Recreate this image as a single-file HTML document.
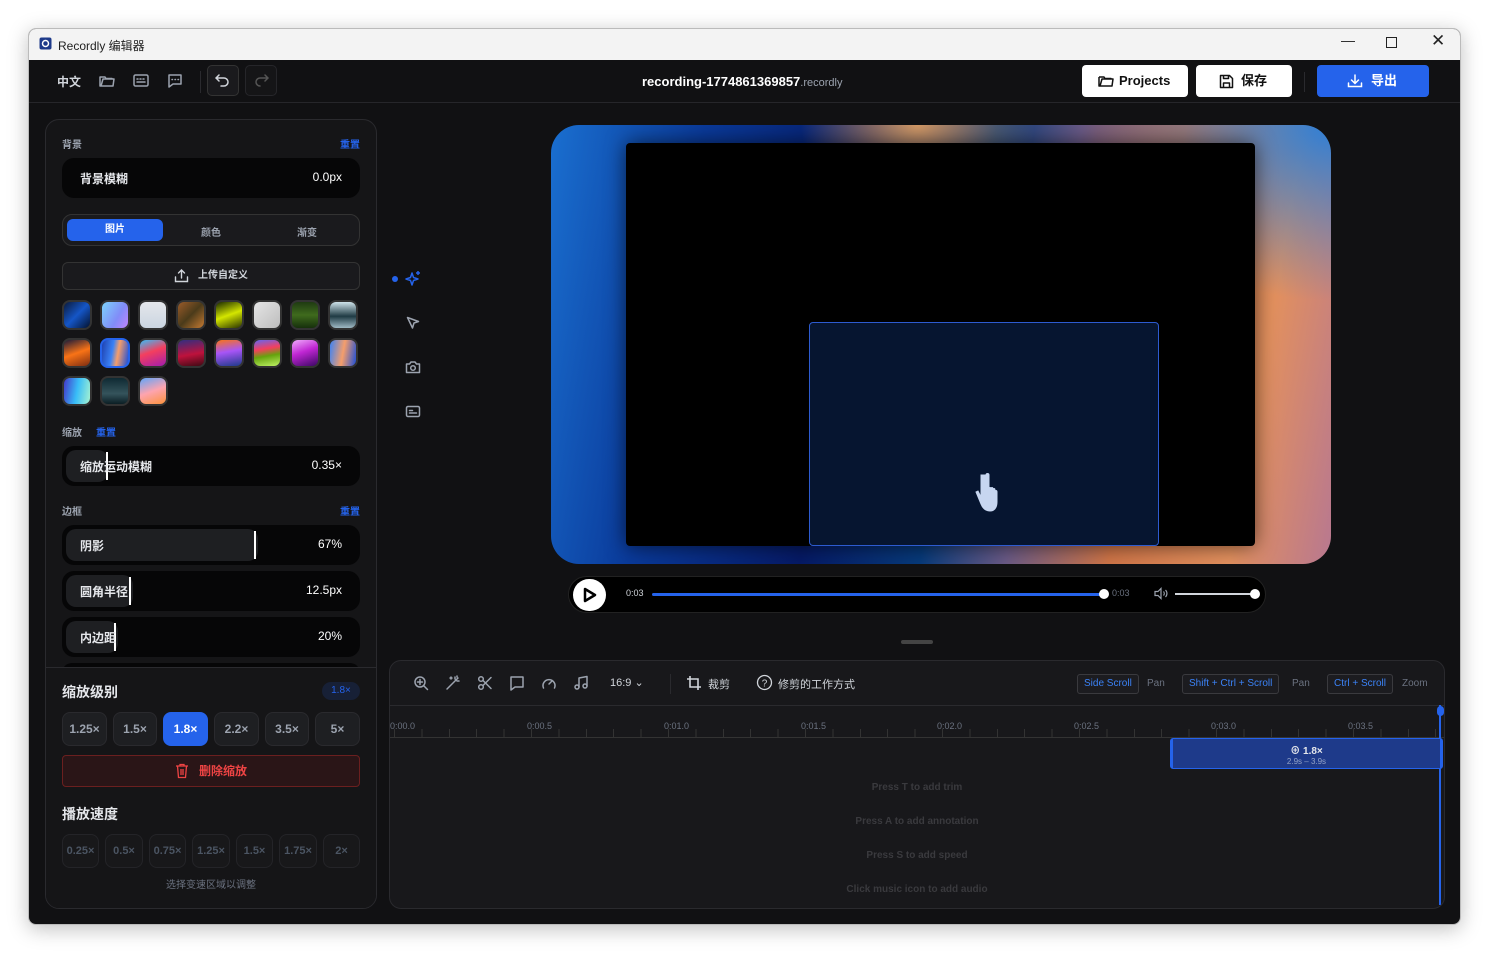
<!DOCTYPE html>
<html><head><meta charset="utf-8"><style>
*{box-sizing:border-box;margin:0;padding:0}
body{width:1490px;height:954px;background:#fff;font-family:"Liberation Sans","Noto Sans CJK SC",sans-serif;position:relative;overflow:hidden;color:#e5e7eb}
.a{position:absolute}
.win{left:28px;top:28px;width:1433px;height:897px;background:#111113;border:1px solid #bbb;border-radius:8px;overflow:hidden;box-shadow:0 4px 20px rgba(0,0,0,.25)}
.tb{left:0;top:0;width:100%;height:31px;background:#f3f3f3;color:#222;font-size:12px}
.ic{stroke:#9ca3af;fill:none;stroke-width:1.5;stroke-linecap:round;stroke-linejoin:round}
.panel{left:16px;top:90px;width:332px;height:790px;background:#151517;border:1px solid #2a2a2e;border-radius:14px;overflow:hidden}
.lbl{font-size:10px;color:#9ca3af;font-weight:bold}
.rst{font-size:10px;color:#2563eb;font-weight:bold}
.sl{left:16px;width:298px;height:40px;background:#060607;border-radius:12px}
.sl .f{position:absolute;left:4px;top:4px;height:32px;background:#1e1f22;border-radius:10px}
.sl .k{position:absolute;top:6px;width:2px;height:28px;background:#fff}
.sl .t{position:absolute;left:18px;top:12px;font-size:12px;font-weight:bold;color:#e5e7eb}
.sl .v{position:absolute;right:18px;top:12px;font-size:12px;color:#fff}
.th{width:30px;height:30px;border-radius:8px;border:2px solid #333}
.zb{top:592px;height:34px;border-radius:8px;background:#1e1f22;border:1px solid #2a2a2e;font-size:12px;font-weight:bold;color:#9ca3af;text-align:center;line-height:32px}
.sb{top:714px;height:34px;border-radius:8px;background:#18181a;border:1px solid #242428;font-size:11px;font-weight:bold;color:#4b5563;text-align:center;line-height:32px}
.kb{top:13px;height:20px;border:1px solid #3a3a3e;border-radius:3px;background:#1c1c20;color:#3b82f6;font-size:10px;line-height:18px;padding:0 6px}
.kt{top:17px;font-size:10px;color:#6b7280}
.tk{font-size:9px;color:#6b7280;top:60px}
.hint{left:0;width:100%;text-align:center;font-size:10px;color:#3a3a3e;font-weight:bold}
</style></head><body>
<div class="a win">
 <div class="a tb">
  <svg class="a" style="left:10px;top:8px" width="13" height="13"><rect x="0.5" y="0.5" width="12" height="12" rx="2" fill="#1e3a8a"/><circle cx="6.5" cy="6.5" r="3" fill="none" stroke="#fff" stroke-width="1.5"/></svg>
  <div class="a" style="left:29px;top:8px">Recordly 编辑器</div>
  <div class="a" style="left:1312px;top:3px;font-size:14px">—</div>
  <div class="a" style="left:1357px;top:8px;width:11px;height:11px;border:1.3px solid #222"></div>
  <div class="a" style="left:1402px;top:2px;font-size:17px">✕</div>
 </div>
 <div class="a" style="left:0;top:73px;width:100%;height:1px;background:#26262a"></div>
 <div class="a" style="left:28px;top:44px;font-size:12px;font-weight:bold;color:#d1d5db">中文</div>
 <svg class="a ic" style="left:70px;top:45px" width="16" height="14"><path d="M1 3v9h13l1-7H4L2 12M1 3h5l1 1.5h6V5"/></svg>
 <svg class="a ic" style="left:104px;top:45px" width="16" height="14"><rect x="1" y="1" width="14" height="11" rx="1.5"/><path d="M4 5h1M7 5h1M10 5h1M4 8h8"/></svg>
 <svg class="a ic" style="left:138px;top:44px" width="16" height="16"><path d="M2 2h12v9H6l-4 3z"/><path d="M5 6.5h.5M8 6.5h.5M11 6.5h.5"/></svg>
 <div class="a" style="left:171px;top:42px;width:1px;height:22px;background:#2a2a2e"></div>
 <div class="a" style="left:178px;top:36px;width:32px;height:31px;border:1px solid #333;border-radius:5px;background:#1a1a1d"></div>
 <svg class="a" style="left:186px;top:44px" width="16" height="14"><path d="M4 2L1 5l3 3M1 5h8a4 4 0 010 8H6" fill="none" stroke="#d1d5db" stroke-width="1.5" stroke-linecap="round"/></svg>
 <div class="a" style="left:216px;top:36px;width:32px;height:31px;border:1px solid #26262a;border-radius:5px;background:#151517"></div>
 <svg class="a" style="left:224px;top:44px" width="16" height="14"><path d="M12 2l3 3-3 3M15 5H7a4 4 0 000 8" fill="none" stroke="#555" stroke-width="1.5" stroke-linecap="round"/></svg>
 <div class="a" style="left:613px;top:45px;font-size:13px;font-weight:bold;color:#fff">recording-1774861369857<span style="font-weight:normal;font-size:11px;color:#9ca3af">.recordly</span></div>
 <div class="a" style="left:1053px;top:36px;width:106px;height:32px;background:#fff;border-radius:4px;color:#111;font-size:13px;font-weight:bold;line-height:32px;padding-left:37px">Projects</div>
 <svg class="a" style="left:1069px;top:45px" width="16" height="14"><path d="M1 3v9h13l1-7H4L2 12M1 3h5l1 1.5h6V5" fill="none" stroke="#111" stroke-width="1.5" stroke-linejoin="round"/></svg>
 <div class="a" style="left:1167px;top:36px;width:96px;height:32px;background:#fff;border-radius:4px;color:#111;font-size:13px;font-weight:bold;line-height:32px;padding-left:45px">保存</div>
 <svg class="a" style="left:1190px;top:45px" width="15" height="15"><path d="M1.5 1.5h9l3 3v9h-12z M4.5 1.5v3h5v-3 M4.5 13.5v-4.5h6v4.5" fill="none" stroke="#111" stroke-width="1.5" stroke-linejoin="round"/></svg>
 <div class="a" style="left:1275px;top:43px;width:1px;height:20px;background:#2a2a2e"></div>
 <div class="a" style="left:1288px;top:36px;width:112px;height:32px;background:#2563eb;border-radius:4px;color:#fff;font-size:13px;font-weight:bold;line-height:32px;padding-left:54px">导出</div>
 <svg class="a" style="left:1318px;top:45px" width="16" height="14"><path d="M8 1v8M4.5 6L8 9.5 11.5 6M1.5 9v3.5h13V9" fill="none" stroke="#fff" stroke-width="1.5" stroke-linecap="round"/></svg>

 <div class="a panel">
  <div class="a lbl" style="left:16px;top:16px">背景</div>
  <div class="a rst" style="right:16px;top:16px">重置</div>
  <div class="a sl" style="top:38px"><div class="t">背景模糊</div><div class="v">0.0px</div></div>
  <div class="a" style="left:16px;top:94px;width:298px;height:32px;border:1px solid #333;border-radius:10px;background:#1a1a1d"></div>
  <div class="a" style="left:21px;top:99px;width:96px;height:22px;background:#2563eb;border-radius:6px;font-size:10px;font-weight:bold;color:#fff;text-align:center;line-height:22px">图片</div>
  <div class="a" style="left:155px;top:104px;font-size:10px;font-weight:bold;color:#9ca3af">颜色</div>
  <div class="a" style="left:251px;top:104px;font-size:10px;font-weight:bold;color:#9ca3af">渐变</div>
  <div class="a" style="left:16px;top:142px;width:298px;height:28px;border:1px solid #333;border-radius:6px;background:#1a1a1d;font-size:10px;font-weight:bold;color:#d1d5db;line-height:26px;padding-left:135px">上传自定义</div>
  <svg class="a" style="left:128px;top:148px" width="15" height="15"><path d="M7.5 10V2M4.5 5l3-3 3 3M1.5 9v4.5h12V9" fill="none" stroke="#d1d5db" stroke-width="1.4" stroke-linecap="round"/></svg>
  <div class="a th" style="left:16px;top:180px;background:linear-gradient(135deg,#0b1a3a,#1556c7 50%,#04122e)"></div>
  <div class="a th" style="left:54px;top:180px;background:linear-gradient(120deg,#7dd3fc,#818cf8 60%,#c084fc)"></div>
  <div class="a th" style="left:92px;top:180px;background:linear-gradient(#e5e7eb,#cbd5e1)"></div>
  <div class="a th" style="left:130px;top:180px;background:linear-gradient(135deg,#9a5b2a,#4b3b1a,#c57a32)"></div>
  <div class="a th" style="left:168px;top:180px;background:linear-gradient(160deg,#1a2a00,#d4e600 50%,#2a3300)"></div>
  <div class="a th" style="left:206px;top:180px;background:linear-gradient(135deg,#e5e5e5,#bdbdbd)"></div>
  <div class="a th" style="left:244px;top:180px;background:linear-gradient(#1f3a12,#3f6b1d,#16300c)"></div>
  <div class="a th" style="left:282px;top:180px;background:linear-gradient(#cfe3ea,#1f3b44 55%,#9fb9c4)"></div>
  <div class="a th" style="left:16px;top:218px;background:linear-gradient(160deg,#1a1a3a,#f97316 50%,#7c2d12)"></div>
  <div class="a th" style="left:54px;top:218px;border-color:#2563eb;background:linear-gradient(100deg,#1e40af,#3b82f6 40%,#f59e6b 60%,#1d4ed8)"></div>
  <div class="a th" style="left:92px;top:218px;background:linear-gradient(160deg,#38bdf8,#f43f5e 45%,#a21caf)"></div>
  <div class="a th" style="left:130px;top:218px;background:linear-gradient(170deg,#312e81,#be123c 55%,#3f0a14)"></div>
  <div class="a th" style="left:168px;top:218px;background:linear-gradient(170deg,#f97316,#a855f7 45%,#1e3a8a)"></div>
  <div class="a th" style="left:206px;top:218px;background:linear-gradient(170deg,#6366f1,#f43f5e 35%,#65a30d 60%,#bef264)"></div>
  <div class="a th" style="left:244px;top:218px;background:linear-gradient(160deg,#f0abfc,#c026d3 45%,#3b0764)"></div>
  <div class="a th" style="left:282px;top:218px;background:linear-gradient(100deg,#3b82f6,#f59e6b 50%,#1d4ed8)"></div>
  <div class="a th" style="left:16px;top:256px;background:linear-gradient(100deg,#4338ca,#38bdf8 50%,#a7f3d0)"></div>
  <div class="a th" style="left:54px;top:256px;background:linear-gradient(#0f2a33,#35545c 60%,#0b1e24)"></div>
  <div class="a th" style="left:92px;top:256px;background:linear-gradient(160deg,#60a5fa,#fda4af 50%,#fb923c)"></div>
  <div class="a lbl" style="left:16px;top:304px">缩放</div>
  <div class="a rst" style="left:50px;top:304px">重置</div>
  <div class="a sl" style="top:326px"><div class="f" style="width:42px"></div><div class="k" style="left:44px"></div><div class="t">缩放运动模糊</div><div class="v">0.35×</div></div>
  <div class="a lbl" style="left:16px;top:383px">边框</div>
  <div class="a rst" style="right:16px;top:383px">重置</div>
  <div class="a sl" style="top:405px"><div class="f" style="width:192px"></div><div class="k" style="left:192px"></div><div class="t">阴影</div><div class="v">67%</div></div>
  <div class="a sl" style="top:451px"><div class="f" style="width:67px"></div><div class="k" style="left:67px"></div><div class="t">圆角半径</div><div class="v">12.5px</div></div>
  <div class="a sl" style="top:497px"><div class="f" style="width:52px"></div><div class="k" style="left:52px"></div><div class="t">内边距</div><div class="v">20%</div></div>
  <div class="a sl" style="top:543px;height:20px"></div>
  <div class="a" style="left:0;top:547px;width:100%;height:250px;background:#151517;border-top:1px solid #2a2a2e"></div>
  <div class="a" style="left:16px;top:562px;font-size:14px;font-weight:bold;color:#e5e7eb">缩放级别</div>
  <div class="a" style="left:276px;top:562px;width:38px;height:18px;border-radius:9px;background:#172036;color:#2563eb;font-size:10px;text-align:center;line-height:18px">1.8×</div>
  <div class="a zb" style="left:16px;width:45px">1.25×</div>
  <div class="a zb" style="left:67px;width:44px">1.5×</div>
  <div class="a zb" style="left:117px;width:45px;background:#2563eb;border-color:#2563eb;color:#fff">1.8×</div>
  <div class="a zb" style="left:168px;width:45px">2.2×</div>
  <div class="a zb" style="left:219px;width:44px">3.5×</div>
  <div class="a zb" style="left:269px;width:45px">5×</div>
  <div class="a" style="left:16px;top:635px;width:298px;height:32px;border:1px solid #6b1f1f;background:#2a1517;border-radius:4px;color:#ef4444;font-size:12px;font-weight:bold;line-height:30px;padding-left:136px">删除缩放</div>
  <svg class="a" style="left:129px;top:643px" width="14" height="16"><path d="M1 3h12M5 3V1.5h4V3M2.5 3l1 11.5h7l1-11.5M6 6v6M8 6v6" fill="none" stroke="#ef4444" stroke-width="1.3"/></svg>
  <div class="a" style="left:16px;top:684px;font-size:14px;font-weight:bold;color:#e5e7eb">播放速度</div>
  <div class="a sb" style="left:16px;width:37px">0.25×</div>
  <div class="a sb" style="left:59px;width:38px">0.5×</div>
  <div class="a sb" style="left:103px;width:37px">0.75×</div>
  <div class="a sb" style="left:146px;width:38px">1.25×</div>
  <div class="a sb" style="left:190px;width:37px">1.5×</div>
  <div class="a sb" style="left:233px;width:38px">1.75×</div>
  <div class="a sb" style="left:277px;width:37px">2×</div>
  <div class="a" style="left:0;top:756px;width:100%;text-align:center;font-size:10px;color:#6b7280">选择变速区域以调整</div>
 </div>

 <div class="a" style="left:363px;top:247px;width:6px;height:6px;border-radius:3px;background:#2563eb"></div>
 <svg class="a" style="left:375px;top:241px" width="18" height="18"><path d="M8 3l1.5 4.5L14 9l-4.5 1.5L8 15l-1.5-4.5L2 9l4.5-1.5z M14 1v4M12 3h4" fill="none" stroke="#2563eb" stroke-width="1.5" stroke-linejoin="round"/></svg>
 <svg class="a ic" style="left:377px;top:287px" width="14" height="14"><path d="M1.5 1.5l11 4-4.5 1.5L6.5 12z"/></svg>
 <svg class="a ic" style="left:376px;top:331px" width="16" height="14"><path d="M1.5 4h3l1.5-2h4l1.5 2h3v8.5h-13z"/><circle cx="8" cy="8" r="2.3"/></svg>
 <svg class="a ic" style="left:376px;top:376px" width="16" height="13"><rect x="1.5" y="1.5" width="13" height="10" rx="1.5"/><path d="M4.5 5.5h3M4.5 8h7"/></svg>

 <div class="a" style="left:522px;top:96px;width:780px;height:439px;border-radius:28px;overflow:hidden;background:radial-gradient(ellipse 30% 40% at 100% 0%,#2f7fd6 0,rgba(47,127,214,0) 100%),radial-gradient(ellipse 15% 20% at 47% 0%,#d49a66 0,rgba(212,154,102,0) 100%),linear-gradient(100deg,#1a6fd0 0%,#0a3a9a 18%,#061a66 38%,#073a7a 52%,#6a5a86 62%,#cf7548 74%,#e2905e 88%,#b87890 100%)">
  <div class="a" style="left:75px;top:18px;width:629px;height:403px;background:#000;border-radius:4px;box-shadow:0 0 20px rgba(0,0,0,.6)"></div>
  <div class="a" style="left:258px;top:197px;width:350px;height:224px;background:#061530;border:1px solid #2d5bd0;border-radius:4px"></div>
  <svg class="a" style="left:420px;top:347px" width="36" height="44"><path d="M10 3v22l-3-6-2 1 5 12c2 5 5 7 9 7s7-3 7-9v-10c0-2-2-2-2 0v3-5c0-2-2-2-2 0v4-5c0-2-2-2-2 0v5-5c0-2-2-2-2 0V25V3c0-2-3-2-3 0z" fill="#c7d6f0" stroke="#c7d6f0" stroke-width="1"/></svg>
 </div>
 <div class="a" style="left:539px;top:547px;width:698px;height:37px;border-radius:19px;background:#000;border:1px solid #222"></div>
 <div class="a" style="left:544px;top:550px;width:33px;height:32px;border-radius:16px;background:#fff"></div>
 <svg class="a" style="left:554px;top:558px" width="14" height="16"><path d="M2 2l10 6-10 6z" fill="none" stroke="#000" stroke-width="2.5" stroke-linejoin="round"/></svg>
 <div class="a" style="left:597px;top:559px;font-size:9px;color:#d1d5db">0:03</div>
 <div class="a" style="left:623px;top:564px;width:452px;height:3px;background:#2563eb;border-radius:2px"></div>
 <div class="a" style="left:1070px;top:560px;width:10px;height:10px;border-radius:5px;background:#fff"></div>
 <div class="a" style="left:1083px;top:559px;font-size:9px;color:#6b7280">0:03</div>
 <svg class="a" style="left:1125px;top:558px" width="14" height="13"><path d="M1 4.5h3l3-3v10l-3-3H1zM9.5 4.5a3 3 0 010 4M11.5 3a5 5 0 010 7" fill="none" stroke="#9ca3af" stroke-width="1.2"/></svg>
 <div class="a" style="left:1146px;top:564px;width:80px;height:2px;background:#d1d5db"></div>
 <div class="a" style="left:1221px;top:560px;width:10px;height:10px;border-radius:5px;background:#fff"></div>
 <div class="a" style="left:872px;top:611px;width:32px;height:4px;border-radius:2px;background:#444"></div>

 <div class="a" style="left:360px;top:631px;width:1056px;height:249px;border:1px solid #2a2a2e;border-radius:12px;background:#18181b;overflow:hidden">
  <svg class="a ic" style="left:23px;top:14px" width="16" height="16"><circle cx="7" cy="7" r="5"/><path d="M11 11l3.5 3.5M7 4.5v5M4.5 7h5"/></svg>
  <svg class="a ic" style="left:55px;top:14px" width="16" height="16"><path d="M2 14L13 3M10 2v2M12 1v1M14 6h-2M6 2v2M5 3h2"/></svg>
  <svg class="a ic" style="left:87px;top:14px" width="16" height="16"><circle cx="4" cy="12" r="2.3"/><circle cx="4" cy="4" r="2.3"/><path d="M6 5.5l8 8M6 10.5l8-8"/></svg>
  <svg class="a ic" style="left:119px;top:14px" width="16" height="16"><path d="M2 2h12v10H6l-4 3z"/></svg>
  <svg class="a ic" style="left:151px;top:14px" width="16" height="16"><path d="M2.5 13a6 6 0 1111 0M8 9l3-3"/></svg>
  <svg class="a ic" style="left:183px;top:14px" width="16" height="16"><path d="M6 12V3l8-1.5V11"/><circle cx="4" cy="12" r="2"/><circle cx="12" cy="11" r="2"/></svg>
  <div class="a" style="left:220px;top:15px;font-size:11px;color:#d1d5db">16:9 ⌄</div>
  <div class="a" style="left:280px;top:13px;width:1px;height:20px;background:#2a2a2e"></div>
  <svg class="a" style="left:296px;top:14px" width="16" height="16"><path d="M4 1v11h11M1 4h11v11" fill="none" stroke="#d1d5db" stroke-width="1.6"/></svg>
  <div class="a" style="left:318px;top:15px;font-size:11px;color:#d1d5db">裁剪</div>
  <svg class="a" style="left:366px;top:13px" width="17" height="17"><circle cx="8.5" cy="8.5" r="7" fill="none" stroke="#d1d5db" stroke-width="1.3"/><text x="8.5" y="12.5" font-size="10" fill="#d1d5db" text-anchor="middle" font-family="Liberation Sans">?</text></svg>
  <div class="a" style="left:388px;top:15px;font-size:11px;color:#d1d5db">修剪的工作方式</div>
  <div class="a kb" style="left:687px">Side Scroll</div><div class="a kt" style="left:757px">Pan</div>
  <div class="a kb" style="left:792px">Shift + Ctrl + Scroll</div><div class="a kt" style="left:902px">Pan</div>
  <div class="a kb" style="left:937px">Ctrl + Scroll</div><div class="a kt" style="left:1012px">Zoom</div>
  <div class="a" style="left:0;top:44px;width:100%;height:1px;background:#2a2a2e"></div>
  <div class="a" style="left:0;top:76px;width:100%;height:1px;background:#333"></div>
  <div class="a" style="left:0;top:44px;width:100%;height:32px;background:repeating-linear-gradient(90deg,transparent 0 4px,#333 4px 5px,transparent 5px 27.4px) 0 24px/100% 8px no-repeat"></div>
  <div class="a tk" style="left:0">0:00.0</div><div class="a tk" style="left:137px">0:00.5</div><div class="a tk" style="left:274px">0:01.0</div><div class="a tk" style="left:411px">0:01.5</div><div class="a tk" style="left:547px">0:02.0</div><div class="a tk" style="left:684px">0:02.5</div><div class="a tk" style="left:821px">0:03.0</div><div class="a tk" style="left:958px">0:03.5</div>
  <div class="a" style="left:1049px;top:44px;width:2px;height:200px;background:#2563eb"></div>
  <div class="a" style="left:1047px;top:45px;width:7px;height:10px;border-radius:4px;background:#2563eb"></div>
  <div class="a" style="left:780px;top:77px;width:273px;height:31px;background:#1e3a8a;border:3px solid #2563eb;border-top-width:1px;border-bottom-width:1px;border-radius:3px;text-align:center">
   <div style="font-size:10px;font-weight:bold;color:#e5e7eb;margin-top:3px">⊕ 1.8×</div>
   <div style="font-size:8px;color:#93a3c8">2.9s – 3.9s</div>
  </div>
  <div class="a hint" style="top:121px">Press T to add trim</div>
  <div class="a hint" style="top:155px">Press A to add annotation</div>
  <div class="a hint" style="top:189px">Press S to add speed</div>
  <div class="a hint" style="top:223px">Click music icon to add audio</div>
 </div>
</div>
</body></html>
